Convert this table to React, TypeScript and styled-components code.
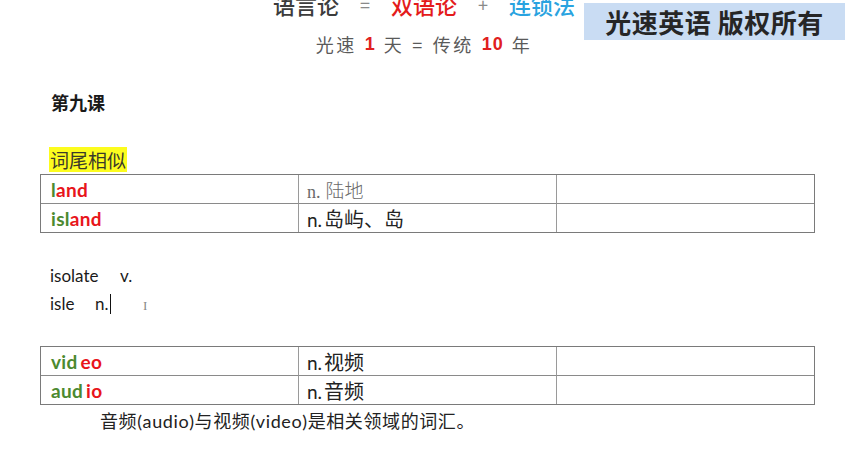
import React from "react";
import styled, { createGlobalStyle } from "styled-components";

const Global = createGlobalStyle`
  html, body { margin: 0; padding: 0; background: #ffffff; }
  body { width: 850px; height: 460px; overflow: hidden; font-family: Lato, "Noto Sans CJK SC", sans-serif; }
`;

const Page = styled.div`
  position: relative;
  width: 850px;
  height: 460px;
  overflow: hidden;
`;

const Header = styled.div`
  display: flex;
  flex-direction: column;
  align-items: center;
  margin-top: -11px;
  padding-right: 2px;
`;

const TitleLine = styled.div`
  display: flex;
  align-items: center;
  gap: 21px;
  height: 30px;
  font-family: "Noto Sans CJK SC", sans-serif;
  font-size: 22px;
  font-weight: 500;
  color: #3c3c3c;
`;

const Tone = styled.span<{ $c: string }>`
  color: ${(p) => p.$c};
`;

const Sym = styled.span`
  color: #8a8a8a;
  font-weight: 400;
  font-size: 18px;
`;

const SubLine = styled.div`
  margin-top: 12px;
  height: 26px;
  display: flex;
  align-items: center;
  gap: 8px;
  font-family: "Noto Sans CJK SC", sans-serif;
  font-size: 18px;
  color: #5a5a5a;
  letter-spacing: 2.5px;
`;

const Num = styled.span`
  color: #e02020;
  font-weight: 700;
  font-family: "Liberation Sans", sans-serif;
  letter-spacing: 1px;
`;

const Watermark = styled.div`
  position: absolute;
  left: 584px;
  top: 3px;
  width: 261px;
  height: 37px;
  background: #c9dcf3;
  display: flex;
  align-items: center;
  justify-content: center;
  font-family: "Noto Sans CJK SC", sans-serif;
  font-weight: 700;
  font-size: 26px;
  color: #262626;
  letter-spacing: 0.5px;
`;

const Body = styled.div`
  padding-left: 40px;
  width: 774px;
`;

const Lesson = styled.div`
  margin-top: 33px;
  padding-left: 11px;
  height: 24px;
  line-height: 24px;
  font-family: "Noto Sans CJK SC", sans-serif;
  font-weight: 700;
  font-size: 18px;
  color: #1a1a1a;
`;

const HighlightRow = styled.div`
  margin-top: 33px;
  padding-left: 9px;
  padding-bottom: 2px;
  height: 25px;
  display: flex;
  align-items: flex-end;
`;

const Highlight = styled.span`
  background: #fcfc1e;
  font-family: "Noto Sans CJK SC", sans-serif;
  font-size: 19px;
  line-height: 25px;
  padding: 0 1px;
  color: #3a3a2a;
`;

const Table = styled.div`
  display: grid;
  grid-template-columns: 258px 258px 1fr;
  border: 1px solid #7a7a7a;
  width: 775px;
  box-sizing: border-box;
`;

const Cell = styled.div<{ $last?: boolean; $col: number }>`
  height: ${(p) => (p.$last ? 28 : 29)}px;
  display: flex;
  align-items: center;
  box-sizing: border-box;
  padding-left: ${(p) => (p.$col === 0 ? 10 : 8)}px;
  border-right: ${(p) => (p.$col < 2 ? "1px solid #9a9a9a" : "none")};
  border-bottom: ${(p) => (p.$last ? "none" : "1px solid #8a8a8a")};
`;

const Word = styled.span`
  font-family: Lato, "Open Sans", sans-serif;
  font-weight: 700;
  font-size: 19px;
  letter-spacing: 0.3px;
`;

const Green = styled.span`
  color: #4c8a30;
`;
const Red = styled.span<{ $gap?: boolean }>`
  color: #e8151b;
  margin-left: ${(p) => (p.$gap ? "3px" : "0")};
`;

const Meaning = styled.span<{ $faint?: boolean }>`
  font-family: ${(p) => (p.$faint ? '"Liberation Serif", "Noto Sans CJK SC", serif' : 'Lato, "Noto Sans CJK SC", sans-serif')};
  font-size: ${(p) => (p.$faint ? 18 : 19)}px;
  color: ${(p) => (p.$faint ? "#6a6a6a" : "#222")};
`;

const MeaningCJK = styled.span<{ $faint?: boolean }>`
  font-family: "Noto Sans CJK SC", sans-serif;
  font-weight: ${(p) => (p.$faint ? 300 : 400)};
  font-size: ${(p) => (p.$faint ? 19 : 20)}px;
  margin-left: ${(p) => (p.$faint ? 5 : 2)}px;
`;

const Notes = styled.div`
  margin-top: 29px;
  padding-left: 10px;
  display: flex;
  flex-direction: column;
`;

const NoteLine = styled.div`
  position: relative;
  height: 28px;
  line-height: 28px;
  font-family: Lato, sans-serif;
  font-size: 17px;
  color: #1a1a1a;
  display: flex;
`;

const Term = styled.span<{ $w: number }>`
  width: ${(p) => p.$w}px;
`;

const Caret = styled.span`
  display: inline-block;
  width: 1px;
  height: 20px;
  background: #111;
  align-self: center;
  margin-left: 1px;
`;

const IBeam = styled.span`
  position: absolute;
  left: 93px;
  top: 9px;
  font-family: "Liberation Serif", serif;
  font-size: 13px;
  line-height: 13px;
  color: #8a8a8a;
`;

const Spacer = styled.div<{ $h: number }>`
  height: ${(p) => p.$h}px;
`;

const Caption = styled.div`
  margin-top: 2px;
  padding-left: 60px;
  height: 26px;
  line-height: 26px;
  font-family: "Noto Sans CJK SC", sans-serif;
  font-size: 18px;
  letter-spacing: 0.6px;
  color: #222;
`;

const CaptionLatin = styled.span`
  font-family: Lato, sans-serif;
`;

type Row = { parts: { t: string; c: "g" | "r"; gap?: boolean }[]; pre: string; cn: string; faint?: boolean };

const table1: Row[] = [
  { parts: [{ t: "l", c: "g" }, { t: "and", c: "r" }], pre: "n.", cn: "陆地", faint: true },
  { parts: [{ t: "isl", c: "g" }, { t: "and", c: "r" }], pre: "n.", cn: "岛屿、岛" },
];
const table2: Row[] = [
  { parts: [{ t: "vid", c: "g" }, { t: "eo", c: "r", gap: true }], pre: "n.", cn: "视频" },
  { parts: [{ t: "aud", c: "g" }, { t: "io", c: "r", gap: true }], pre: "n.", cn: "音频" },
];

function WordTable({ rows }: { rows: Row[] }) {
  return (
    <Table>
      {rows.map((r, i) => {
        const last = i === rows.length - 1;
        return (
          <React.Fragment key={i}>
            <Cell $col={0} $last={last}>
              <Word>
                {r.parts.map((p, j) =>
                  p.c === "g" ? <Green key={j}>{p.t}</Green> : <Red key={j} $gap={p.gap}>{p.t}</Red>
                )}
              </Word>
            </Cell>
            <Cell $col={1} $last={last}>
              <Meaning $faint={r.faint}>
                {r.pre}
                <MeaningCJK $faint={r.faint}>{r.cn}</MeaningCJK>
              </Meaning>
            </Cell>
            <Cell $col={2} $last={last} />
          </React.Fragment>
        );
      })}
    </Table>
  );
}

export default function App() {
  return (
    <Page>
      <Global />
      <Header>
        <TitleLine>
          <span>语言论</span>
          <Sym>=</Sym>
          <Tone $c="#e41b1b">双语论</Tone>
          <Sym>+</Sym>
          <Tone $c="#29a3e0">连锁法</Tone>
        </TitleLine>
        <SubLine>
          <span>光速</span>
          <Num>1</Num>
          <span>天</span>
          <span>=</span>
          <span>传统</span>
          <Num>10</Num>
          <span>年</span>
        </SubLine>
      </Header>
      <Watermark>光速英语 版权所有</Watermark>
      <Body>
        <Lesson>第九课</Lesson>
        <HighlightRow>
          <Highlight>词尾相似</Highlight>
        </HighlightRow>
        <WordTable rows={table1} />
        <Notes>
          <NoteLine>
            <Term $w={70}>isolate</Term>
            <span>v.</span>
          </NoteLine>
          <NoteLine>
            <Term $w={45}>isle</Term>
            <span>n.</span>
            <Caret />
            <IBeam>I</IBeam>
          </NoteLine>
        </Notes>
        <Spacer $h={28} />
        <WordTable rows={table2} />
        <Caption>
          音频<CaptionLatin>(audio)</CaptionLatin>与视频<CaptionLatin>(video)</CaptionLatin>是相关领域的词汇。
        </Caption>
      </Body>
    </Page>
  );
}
